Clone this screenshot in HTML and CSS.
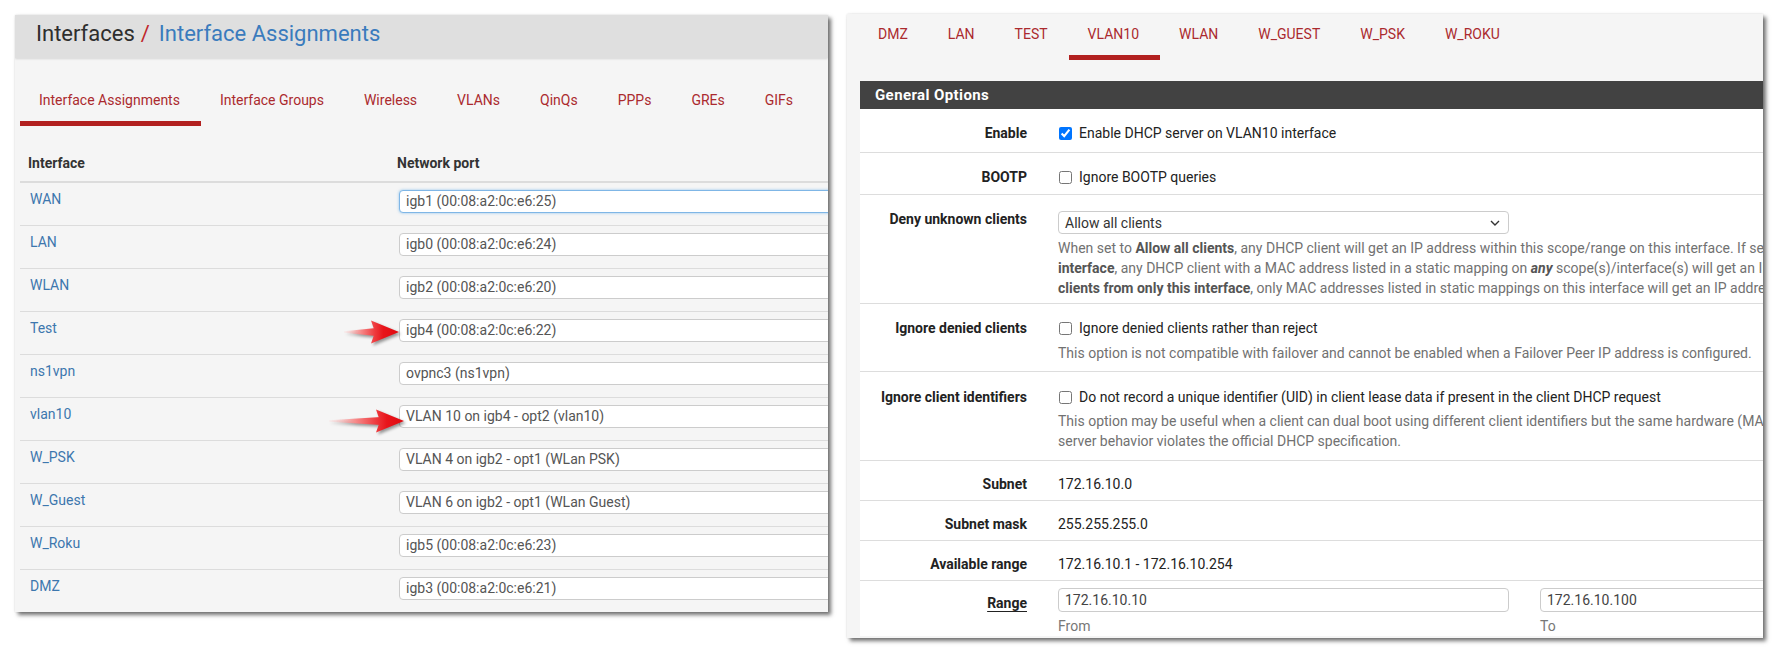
FILE: index.html
```html
<!DOCTYPE html>
<html lang="en">
<head>
<meta charset="utf-8">
<title>Interface Assignments / DHCP Server</title>
<link rel="stylesheet" href="styles.css">
</head>
<body>
<div class="page">
  <section class="panel panel-left">
    <div class="titlebar">
      <h1><span class="crumb">Interfaces</span><span class="sep">/</span><span class="cur">Interface Assignments</span></h1>
    </div>
    <nav class="tabs ltabs">
      <a class="active">Interface Assignments</a>
      <a>Interface Groups</a>
      <a>Wireless</a>
      <a>VLANs</a>
      <a>QinQs</a>
      <a>PPPs</a>
      <a>GREs</a>
      <a>GIFs</a>
    </nav>
    <div class="iftable">
      <div class="ifhead"><div class="c1">Interface</div><div class="c2">Network port</div></div>
      <div class="ifrow"><div class="c1"><a>WAN</a></div><div class="c2"><div class="sel focus">igb1 (00:08:a2:0c:e6:25)</div></div></div>
      <div class="ifrow"><div class="c1"><a>LAN</a></div><div class="c2"><div class="sel">igb0 (00:08:a2:0c:e6:24)</div></div></div>
      <div class="ifrow"><div class="c1"><a>WLAN</a></div><div class="c2"><div class="sel">igb2 (00:08:a2:0c:e6:20)</div></div></div>
      <div class="ifrow"><div class="c1"><a>Test</a></div><div class="c2"><div class="sel">igb4 (00:08:a2:0c:e6:22)</div></div>
        <svg class="arrow arrow-a" width="56" height="26" viewBox="0 0 56 26">
          <defs><linearGradient id="ga" x1="0" y1="0" x2="56" y2="0" gradientUnits="userSpaceOnUse"><stop offset="0" stop-color="#ffc4c4" stop-opacity="0.15"/><stop offset="0.3" stop-color="#f78a8a"/><stop offset="0.55" stop-color="#ee3a3e"/><stop offset="0.7" stop-color="#e8151b"/><stop offset="1" stop-color="#e0080f"/></linearGradient></defs>
          <path d="M0,12.2 L32,9 L32,17 L0,13.8 Z" fill="url(#ga)"/>
          <path d="M27,1.5 L55,13 L27,24.5 L31,13 Z" fill="url(#ga)"/>
        </svg>
      </div>
      <div class="ifrow"><div class="c1"><a>ns1vpn</a></div><div class="c2"><div class="sel">ovpnc3 (ns1vpn)</div></div></div>
      <div class="ifrow"><div class="c1"><a>vlan10</a></div><div class="c2"><div class="sel">VLAN 10 on igb4 - opt2 (vlan10)</div></div>
        <svg class="arrow arrow-b" width="76" height="26" viewBox="0 0 76 26">
          <defs><linearGradient id="gb" x1="0" y1="0" x2="76" y2="0" gradientUnits="userSpaceOnUse"><stop offset="0" stop-color="#ffc4c4" stop-opacity="0.15"/><stop offset="0.35" stop-color="#f78a8a"/><stop offset="0.62" stop-color="#ee3a3e"/><stop offset="0.76" stop-color="#e8151b"/><stop offset="1" stop-color="#e0080f"/></linearGradient></defs>
          <path d="M0,12.2 L52,9 L52,17 L0,13.8 Z" fill="url(#gb)"/>
          <path d="M47,1.5 L75,13 L47,24.5 L51,13 Z" fill="url(#gb)"/>
        </svg>
      </div>
      <div class="ifrow"><div class="c1"><a>W_PSK</a></div><div class="c2"><div class="sel">VLAN 4 on igb2 - opt1 (WLan PSK)</div></div></div>
      <div class="ifrow"><div class="c1"><a>W_Guest</a></div><div class="c2"><div class="sel">VLAN 6 on igb2 - opt1 (WLan Guest)</div></div></div>
      <div class="ifrow"><div class="c1"><a>W_Roku</a></div><div class="c2"><div class="sel">igb5 (00:08:a2:0c:e6:23)</div></div></div>
      <div class="ifrow"><div class="c1"><a>DMZ</a></div><div class="c2"><div class="sel">igb3 (00:08:a2:0c:e6:21)</div></div></div>
    </div>
  </section>

  <section class="panel panel-right">
    <nav class="tabs rtabs">
      <a>DMZ</a>
      <a>LAN</a>
      <a>TEST</a>
      <a class="active">VLAN10</a>
      <a>WLAN</a>
      <a>W_GUEST</a>
      <a>W_PSK</a>
      <a>W_ROKU</a>
    </nav>
    <div class="rbody">
      <div class="sectionbar">General Options</div>
      <div class="form">
        <div class="frow r-enable">
          <div class="flabel">Enable</div>
          <div class="fcontent"><label class="chk"><input type="checkbox" checked>Enable DHCP server on VLAN10 interface</label></div>
        </div>
        <div class="frow r-bootp">
          <div class="flabel">BOOTP</div>
          <div class="fcontent"><label class="chk"><input type="checkbox">Ignore BOOTP queries</label></div>
        </div>
        <div class="frow r-deny">
          <div class="flabel">Deny unknown clients</div>
          <div class="fcontent">
            <div class="dsel"><span>Allow all clients</span><svg width="10" height="6" viewBox="0 0 10 6"><path d="M1,1 L5,5 L9,1" fill="none" stroke="#333" stroke-width="1.4"/></svg></div>
            <div class="help">When set to <b>Allow all clients</b>, any DHCP client will get an IP address within this scope/range on this interface. If set to <b>Allow known clients from any</b><br><b>interface</b>, any DHCP client with a MAC address listed in a static mapping on <b><i>any</i></b> scope(s)/interface(s) will get an IP address. If set to <b>Allow known</b><br><b>clients from only this interface</b>, only MAC addresses listed in static mappings on this interface will get an IP address within this scope/range.</div>
          </div>
        </div>
        <div class="frow r-denied">
          <div class="flabel">Ignore denied clients</div>
          <div class="fcontent">
            <label class="chk"><input type="checkbox">Ignore denied clients rather than reject</label>
            <div class="help">This option is not compatible with failover and cannot be enabled when a Failover Peer IP address is configured.</div>
          </div>
        </div>
        <div class="frow r-uid">
          <div class="flabel">Ignore client identifiers</div>
          <div class="fcontent">
            <label class="chk"><input type="checkbox">Do not record a unique identifier (UID) in client lease data if present in the client DHCP request</label>
            <div class="help">This option may be useful when a client can dual boot using different client identifiers but the same hardware (MAC) address. Note that the resulting<br>server behavior violates the official DHCP specification.</div>
          </div>
        </div>
        <div class="frow r-static">
          <div class="flabel">Subnet</div>
          <div class="fcontent">172.16.10.0</div>
        </div>
        <div class="frow r-static">
          <div class="flabel">Subnet mask</div>
          <div class="fcontent">255.255.255.0</div>
        </div>
        <div class="frow r-static">
          <div class="flabel">Available range</div>
          <div class="fcontent">172.16.10.1 - 172.16.10.254</div>
        </div>
        <div class="frow r-range">
          <div class="flabel"><span class="ul">Range</span></div>
          <div class="fcontent">
            <div class="rangecols">
              <div class="rcol"><div class="inp">172.16.10.10</div><div class="sub">From</div></div>
              <div class="rcol"><div class="inp">172.16.10.100</div><div class="sub">To</div></div>
            </div>
          </div>
        </div>
      </div>
    </div>
  </section>
</div>
</body>
</html>
```

FILE: styles.css
```css
* { box-sizing: border-box; }
html, body { margin: 0; padding: 0; background: #ffffff; }
body {
  width: 1778px;
  height: 654px;
  overflow: hidden;
  font-family: Roboto, "Liberation Sans", Arial, sans-serif;
  font-size: 14px;
  line-height: 20px;
  color: #222222;
}
.page {
  display: flex;
  align-items: flex-start;
  gap: 19px;
  padding: 14px 0 0 15px;
}
.panel {
  position: relative;
  overflow: hidden;
  background: #f5f5f5;
  box-shadow: 3px 3px 4px rgba(0,0,0,0.55), 0 0 2px rgba(0,0,0,0.12);
}
.panel-left { width: 813px; height: 597px; margin-top: 1px; }
.panel-right { width: 916px; height: 624px; }

/* title */
.titlebar {
  height: 43px;
  background: #dfdfdf;
  padding-left: 21px;
  box-shadow: 0 1px 2px rgba(0,0,0,0.12);
}
.titlebar h1 {
  margin: 0;
  font-size: 22px;
  font-weight: 400;
  line-height: 37px;
  color: #2e2e2e;
  white-space: nowrap;
}
.sep { color: #c0282d; margin: 0 9px 0 6px; }
.cur { color: #3a7bbd; }

/* tabs */
.tabs { display: flex; }
.tabs a {
  color: #ab2a2e;
  text-decoration: none;
  border-bottom: 5px solid transparent;
  line-height: 20px;
  white-space: nowrap;
}
.tabs a.active { border-bottom-color: #b2201f; }
.ltabs { margin-top: 20px; padding-left: 5px; }
.ltabs a { padding: 12px 21px 11px 19px; }
.rtabs { padding-left: 12px; }
.rtabs a { padding: 10px 21px 11px 19px; }

/* interface table */
.iftable { margin: 19px 0 0 5px; width: 1100px; }
.ifhead {
  display: flex;
  height: 38px;
  border-bottom: 2px solid #dcdcdc;
  font-weight: 700;
  color: #333333;
}
.ifhead .c1 { width: 369px; padding: 8px 0 0 8px; }
.ifhead .c2 { padding: 8px 0 0 8px; }
.ifrow {
  position: relative;
  display: flex;
  height: 43px;
  border-bottom: 1px solid #dcdcdc;
}
.ifrow .c1 { width: 369px; padding: 6px 0 0 10px; }
.ifrow .c1 a { color: #3d77ae; text-decoration: none; }
.ifrow .c2 { padding: 7px 0 0 10px; }
.sel {
  width: 620px;
  height: 23px;
  border: 1px solid #cccccc;
  border-radius: 4px;
  background: #ffffff;
  padding: 0 6px;
  line-height: 21px;
  color: #555555;
  white-space: nowrap;
}
.sel.focus {
  border-color: #7fb6e6;
  box-shadow: 0 0 3px rgba(102,175,233,0.7);
}
.arrow {
  position: absolute;
  filter: drop-shadow(2px 2px 1.5px rgba(0,0,0,0.4));
}
.arrow-a { left: 324px; top: 7px; }
.arrow-b { left: 309px; top: 10px; }

/* right panel */
.rbody { padding-left: 13px; }
.sectionbar {
  margin-top: 21px;
  height: 28px;
  width: 1100px;
  background: #424242;
  color: #ffffff;
  font-weight: 700;
  font-size: 15px;
  line-height: 28px;
  padding-left: 15px;
  letter-spacing: 0.4px;
}
.form { background: #ffffff; width: 1100px; }
.frow { display: flex; border-bottom: 1px solid #dddddd; }
.flabel {
  width: 183px;
  flex: none;
  padding: 14px 16px 0 0;
  text-align: right;
  font-weight: 700;
  color: #222222;
  white-space: nowrap;
}
.fcontent {
  flex: 1;
  padding: 14px 0 8px 15px;
  white-space: nowrap;
  color: #222222;
}
.chk { display: flex; align-items: center; height: 20px; }
.chk input {
  width: 13px;
  height: 13px;
  margin: 0 7px 0 1px;
  flex: none;
}
.help { color: #717171; margin-top: 4px; }
.help b { color: #555555; }

.r-enable .fcontent { padding-bottom: 9px; }
.r-bootp .fcontent { padding-bottom: 7px; }
.r-deny .fcontent { padding-top: 16px; padding-bottom: 5px; }
.r-denied .fcontent { padding-bottom: 8px; }
.r-denied .help { margin-top: 5px; }
.r-uid .flabel { padding-top: 15px; }
.r-uid .fcontent { padding-top: 15px; padding-bottom: 9px; }
.r-static .flabel { padding-top: 13px; }
.r-static .fcontent { padding-top: 13px; padding-bottom: 6px; }
.r-range { border-bottom: none; }
.r-range .flabel { padding-top: 12px; }
.r-range .fcontent { padding-top: 7px; padding-bottom: 0; }
.ul { text-decoration: underline; text-underline-offset: 3px; }

.dsel {
  width: 451px;
  height: 23px;
  border: 1px solid #cccccc;
  border-radius: 4px;
  background: #ffffff;
  padding: 0 8px 0 6px;
  display: flex;
  align-items: center;
  justify-content: space-between;
  color: #333333;
}
.rangecols { display: flex; gap: 31px; }
.rcol { width: 451px; flex: none; }
.inp {
  height: 24px;
  border: 1px solid #cccccc;
  border-radius: 4px;
  background: #ffffff;
  padding: 0 6px;
  line-height: 22px;
  color: #444444;
}
.sub { color: #777777; margin-top: 4px; }
```
